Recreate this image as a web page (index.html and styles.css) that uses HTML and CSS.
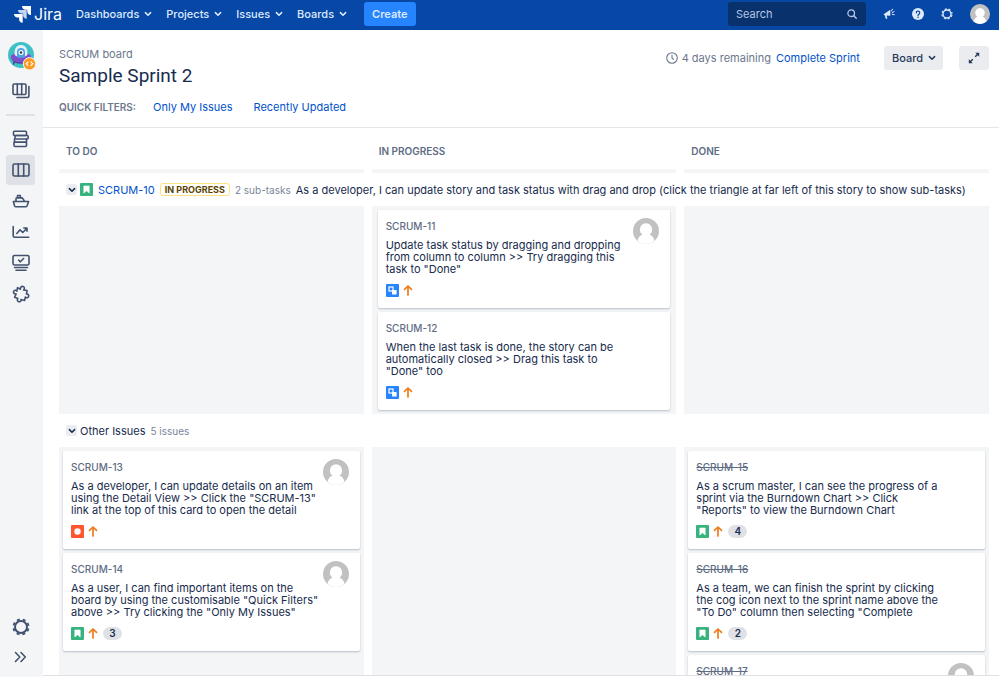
FILE: index.html
```
<!DOCTYPE html>
<html lang="en">
<head>
    <meta charset="UTF-8">
    <meta name="viewport" content="width=device-width, initial-scale=1.0">
    <title>SCRUM board - Jira</title>
    <link rel="stylesheet" href="styles.css">
</head>
<body>
    <svg class="sprite" aria-hidden="true">
        <symbol id="chevron" viewBox="0 0 8 8"><path d="M1.4 2.6 4 5.2l2.6-2.6" fill="none" stroke="currentColor" stroke-width="1.5" stroke-linecap="round" stroke-linejoin="round"/></symbol>
        <symbol id="story" viewBox="0 0 13 13"><rect width="13" height="13" rx="1" fill="#36b37e"/><path d="M3.800 3h5.400v7L6.500 7.800 3.800 10z" fill="#fff" stroke="#fff" stroke-width=".6" stroke-linejoin="round"/></symbol>
        <symbol id="subtask" viewBox="0 0 13 13"><rect width="13" height="13" rx="1" fill="#2684ff"/><rect x="3" y="3" width="4" height="4" fill="none" stroke="#fff" stroke-width="1.2"/><rect x="6" y="6" width="4.600" height="4.600" rx=".5" fill="#fff"/></symbol>
        <symbol id="bug" viewBox="0 0 13 13"><rect width="13" height="13" rx="1" fill="#ff5630"/><circle cx="6.500" cy="6.500" r="3.200" fill="#fff"/></symbol>
        <symbol id="priority" viewBox="0 0 10 13"><path d="M5 11V2.200M1.500 5.400 5 2l3.500 3.400" fill="none" stroke="#ee7d1c" stroke-width="1.700" stroke-linecap="round" stroke-linejoin="round"/></symbol>
        <symbol id="person" viewBox="0 0 26 26"><circle cx="13" cy="13" r="13" fill="#c1c1c1"/><path d="M4.500 22.800c.7-3.500 2.600-5.300 4.900-6.300a6.200 6.200 0 1 1 7.200 0c2.300 1 4.200 2.800 4.900 6.300A13 13 0 0 1 13 26a13 13 0 0 1-8.500-3.200z" fill="#fff"/></symbol>
        <symbol id="gear" viewBox="0 0 18 18"><circle cx="9" cy="9" r="6" fill="none" stroke="currentColor" stroke-width="2"/><circle cx="9" cy="9" r="7.600" fill="none" stroke="currentColor" stroke-width="1.800" stroke-dasharray="3 2.969" stroke-dashoffset="-1.500"/></symbol>
    </svg>

    <header class="topbar">
        <a class="logo" href="#">
            <svg width="17" height="17" viewBox="0 0 17 17"><path d="M8 0h9v9c-2.200 0-3.700-1.500-3.700-3.600V3.700h-1.700C9.500 3.700 8 2.200 8 0z" fill="#fff"/><path d="M4 4h8.700v8.700c-2.100 0-3.600-1.500-3.600-3.500V7.600H7.500C5.500 7.600 4 6.100 4 4z" fill="#c3d5f0"/><path d="M0 8h8.700v8.700c-2.100 0-3.600-1.500-3.600-3.500v-1.600H3.500C1.500 11.600 0 10.100 0 8z" fill="#fff"/></svg>
            <span>Jira</span>
        </a>
        <nav class="menu">
            <button type="button">Dashboards <svg class="chev"><use href="#chevron"/></svg></button>
            <button type="button">Projects <svg class="chev"><use href="#chevron"/></svg></button>
            <button type="button">Issues <svg class="chev"><use href="#chevron"/></svg></button>
            <button type="button">Boards <svg class="chev"><use href="#chevron"/></svg></button>
        </nav>
        <button type="button" class="create">Create</button>
        <label class="search">
            <input type="search" placeholder="Search" aria-label="Search">
            <svg width="10" height="10" viewBox="0 0 10 10"><circle cx="4.200" cy="4.200" r="3.300" fill="none" stroke="currentColor" stroke-width="1.300"/><path d="m6.800 6.800 2.400 2.400" stroke="currentColor" stroke-width="1.500" stroke-linecap="round"/></svg>
        </label>
        <div class="tools">
            <button type="button" aria-label="Feedback"><svg width="12" height="12" viewBox="0 0 12 12"><path d="M.6 6.200 7.300 1.800v6L3.600 7.600l.8 3-1.500.4L1.800 7.500z" fill="currentColor"/><path d="m8.600 3 .8-1.800M9.200 4.600l1.900-1M9.200 6.300l2 .4" stroke="currentColor" stroke-linecap="round"/></svg></button>
            <button type="button" aria-label="Help"><svg width="12" height="12" viewBox="0 0 12 12"><circle cx="6" cy="6" r="6" fill="currentColor"/><path d="M4.300 4.800a1.700 1.700 0 1 1 2.600 1.400c-.6.400-.9.600-.9 1.200" fill="none" stroke="#0747a6" stroke-width="1.200" stroke-linecap="round"/><circle cx="6" cy="9.200" r=".8" fill="#0747a6"/></svg></button>
            <button type="button" aria-label="Settings"><svg width="12" height="12"><use href="#gear"/></svg></button>
            <button type="button" aria-label="Profile"><svg width="20" height="20"><use href="#person"/></svg></button>
        </div>
    </header>

    <div class="layout">
        <aside class="sidebar">
            <a class="project" href="#" aria-label="Project">
                <svg width="28" height="28" viewBox="0 0 28 28"><circle cx="13" cy="13" r="13" fill="#3fc1c4"/><path d="m7 18-1.500 4M19 18l1.500 4" stroke="#5e3ca8" stroke-width="1.500" stroke-linecap="round"/><ellipse cx="13" cy="15.300" rx="10.300" ry="5" fill="#7f4fc9"/><path d="M4 17.500c4 3.500 14 3.500 18 0-1 3-5 4.300-9 4.300s-8-1.300-9-4.300z" fill="#5e3ca8"/><path d="M6.500 12C6.500 6 9 3 13 3s6.500 3 6.500 9c0 4-13 4-13 0z" fill="#e6f3fb"/><path d="M9 15V10a4 4 0 0 1 8 0v5c-2 1.200-6 1.200-8 0z" fill="#4ba3e3"/><circle cx="13" cy="10.500" r="2.500" fill="#fff"/><circle cx="13" cy="10.500" r="1.200" fill="#253858"/><circle cx="21.500" cy="21.800" r="6.200" fill="#ff991f" stroke="#f4f5f7"/><path d="m20.300 19.700-2 2.100 2 2.100M22.700 19.700l2 2.100-2 2.100" fill="none" stroke="#fff" stroke-width="1.200"/></svg>
            </a>
            <a class="side_link switcher" href="#" aria-label="Boards"><svg width="18" height="16" viewBox="0 0 18 16"><rect x="1" y="1" width="13" height="10.500" rx="1.200"/><path d="M5.300 1v10.500M9.700 1v10.500M16.900 3.500v9.300q0 1.700-1.700 1.700H5"/></svg></a>
            <div class="divider"></div>
            <a class="side_link" href="#" aria-label="Backlog"><svg width="18" height="18" viewBox="0 0 18 18"><rect x="1.500" y="1.300" width="13" height="4.200" rx="1"/><rect x="3" y="5.500" width="13.200" height="3.500" rx="1"/><path d="M2.500 9v3h12V9M2 12.200h12.500v3.300q0 1-1 1H3q-1 0-1-1z"/></svg></a>
            <a class="side_link active" href="#" aria-label="Active sprints"><svg width="18" height="14" viewBox="0 0 18 14"><rect x="1" y="1" width="16" height="12" rx="1.500"/><path d="M6.300 1v12M11.700 1v12"/></svg></a>
            <a class="side_link" href="#" aria-label="Releases"><svg width="18" height="14" viewBox="0 0 18 14"><path d="M1.400 7.500h15.200l-1.500 4.200q-.4 1-1.500 1H4q-1.100 0-1.500-1zM4 7.500V4.700q0-.8.800-.8h5.500l2.400 3.600M5.500 3.900V1.500h2.800v2.400"/></svg></a>
            <a class="side_link" href="#" aria-label="Reports"><svg width="18" height="14" viewBox="0 0 18 14"><path d="M1.200 1.500v9.300q0 1.500 1.500 1.500h14M4.800 8.500l3.200-3.700 2.800 2.700 4-4.200M11.800 3h3.200v3.200"/></svg></a>
            <a class="side_link" href="#" aria-label="Issues and filters"><svg width="18" height="18" viewBox="0 0 18 18"><rect x="1" y="1.500" width="16" height="9.500" rx="1.500"/><path d="m6.700 6.200 1.700 1.600 3.200-3.300M2.500 13.500h13M4 16.200h10"/></svg></a>
            <a class="side_link" href="#" aria-label="Add-ons"><svg width="18" height="18" viewBox="0 0 18 18"><path transform="rotate(18 9 9)" d="M7 4.600C6.100 2.600 7 1.200 8.600 1.200s2.500 1.400 1.600 3.200l3.500-.6.500 3.600c1.500-.8 2.800.1 2.800 1.600s-1.300 2.400-2.900 1.500l.3 3.600-3.700.2c.7 1.500-.1 2.700-1.500 2.700s-2.400-1.200-1.800-2.800l-3.500-.2.500-3.500C2.800 11.300 1.300 10.500 1.200 9s1.500-2.500 3-1.500L3.700 4z"/></svg></a>
            <div class="side_bottom">
                <a class="side_link" href="#" aria-label="Project settings"><svg width="18" height="18"><use class="gear" href="#gear"/></svg></a>
                <a class="side_link" href="#" aria-label="Expand sidebar"><svg width="13" height="12" viewBox="0 0 13 12"><path d="m1.500 1.500 4.300 4.500-4.300 4.500M7 1.500 11.300 6 7 10.500"/></svg></a>
            </div>
        </aside>

        <main class="main">
            <div class="page_head">
                <div class="head_row">
                    <div>
                        <div class="crumb">SCRUM board</div>
                        <h1>Sample Sprint 2</h1>
                    </div>
                    <div class="actions">
                        <svg width="12" height="12" viewBox="0 0 12 12"><circle cx="6" cy="6" r="5.300" fill="none" stroke="currentColor" stroke-width="1.100"/><path d="M6 2.800V6l2 1.600" fill="none" stroke="currentColor" stroke-width="1.100"/></svg>
                        <span class="remaining">4 days remaining</span>
                        <a class="complete" href="#">Complete Sprint</a>
                        <button type="button" class="grey_btn board_btn">Board <svg class="chev"><use href="#chevron"/></svg></button>
                        <button type="button" class="grey_btn expand_btn" aria-label="Full screen"><svg width="12" height="12" viewBox="0 0 12 12"><path d="M7.200 4.800 10 2M4.800 7.200 2 10" stroke="currentColor" stroke-width="1.400"/><path d="M7.300.8h3.900v3.900zM.8 7.300v3.900h3.900z" fill="currentColor"/></svg></button>
                    </div>
                </div>
                <div class="filters">
                    <span>QUICK FILTERS:</span>
                    <a href="#">Only My Issues</a>
                    <a href="#">Recently Updated</a>
                </div>
            </div>

            <div class="board">
                <div class="columns col_heads">
                    <h2>TO DO</h2>
                    <h2>IN PROGRESS</h2>
                    <h2>DONE</h2>
                </div>

                <div class="lane_head">
                    <button type="button" class="toggle" aria-label="Collapse"><svg class="chev"><use href="#chevron"/></svg></button>
                    <svg class="type"><use href="#story"/></svg>
                    <a class="lane_key" href="#">SCRUM-10</a>
                    <span class="status">IN PROGRESS</span>
                    <span class="count">2 sub-tasks</span>
                    <span class="lane_title">As a developer, I can update story and task status with drag and drop (click the triangle at far left of this story to show sub-tasks)</span>
                </div>
                <div class="columns">
                    <div class="column"></div>
                    <div class="column wide_pad">
                        <article class="card">
                            <div class="card_body">
                                <a class="key" href="#">SCRUM-11</a>
                                <p>Update task status by dragging and dropping<br>from column to column &gt;&gt; Try dragging this<br>task to "Done"</p>
                                <div class="meta"><svg class="type"><use href="#subtask"/></svg><svg class="prio"><use href="#priority"/></svg></div>
                            </div>
                            <svg class="avatar"><use href="#person"/></svg>
                        </article>
                        <article class="card">
                            <div class="card_body">
                                <a class="key" href="#">SCRUM-12</a>
                                <p>When the last task is done, the story can be<br>automatically closed &gt;&gt; Drag this task to<br>"Done" too</p>
                                <div class="meta"><svg class="type"><use href="#subtask"/></svg><svg class="prio"><use href="#priority"/></svg></div>
                            </div>
                        </article>
                    </div>
                    <div class="column"></div>
                </div>

                <div class="lane_head">
                    <button type="button" class="toggle" aria-label="Collapse"><svg class="chev"><use href="#chevron"/></svg></button>
                    <span class="lane_title">Other Issues</span>
                    <span class="count">5 issues</span>
                </div>
                <div class="columns">
                    <div class="column">
                        <article class="card">
                            <div class="card_body">
                                <a class="key" href="#">SCRUM-13</a>
                                <p>As a developer, I can update details on an item<br>using the Detail View &gt;&gt; Click the "SCRUM-13"<br>link at the top of this card to open the detail</p>
                                <div class="meta"><svg class="type"><use href="#bug"/></svg><svg class="prio"><use href="#priority"/></svg></div>
                            </div>
                            <svg class="avatar"><use href="#person"/></svg>
                        </article>
                        <article class="card">
                            <div class="card_body">
                                <a class="key" href="#">SCRUM-14</a>
                                <p>As a user, I can find important items on the<br>board by using the customisable "Quick Filters"<br>above &gt;&gt; Try clicking the "Only My Issues"</p>
                                <div class="meta"><svg class="type"><use href="#story"/></svg><svg class="prio"><use href="#priority"/></svg><span class="points">3</span></div>
                            </div>
                            <svg class="avatar"><use href="#person"/></svg>
                        </article>
                    </div>
                    <div class="column"></div>
                    <div class="column">
                        <article class="card">
                            <div class="card_body">
                                <a class="key done" href="#">SCRUM-15</a>
                                <p>As a scrum master, I can see the progress of a<br>sprint via the Burndown Chart &gt;&gt; Click<br>"Reports" to view the Burndown Chart</p>
                                <div class="meta"><svg class="type"><use href="#story"/></svg><svg class="prio"><use href="#priority"/></svg><span class="points">4</span></div>
                            </div>
                        </article>
                        <article class="card">
                            <div class="card_body">
                                <a class="key done" href="#">SCRUM-16</a>
                                <p>As a team, we can finish the sprint by clicking<br>the cog icon next to the sprint name above the<br>"To Do" column then selecting "Complete</p>
                                <div class="meta"><svg class="type"><use href="#story"/></svg><svg class="prio"><use href="#priority"/></svg><span class="points">2</span></div>
                            </div>
                        </article>
                        <article class="card">
                            <div class="card_body">
                                <a class="key done" href="#">SCRUM-17</a>
                                <div class="meta"><svg class="type"><use href="#story"/></svg><svg class="prio"><use href="#priority"/></svg></div>
                            </div>
                            <svg class="avatar"><use href="#person"/></svg>
                        </article>
                    </div>
                </div>
            </div>
        </main>
    </div>
</body>
</html>
```
FILE: styles.css
```
*{margin: 0; padding: 0; box-sizing: border-box;}
body{height: 100vh; display: flex; flex-direction: column; overflow: hidden; font-family: Inter, "Liberation Sans", sans-serif; font-size: 11px; line-height: 16px; color: #172b4d; background: #fff;}
a{color: #0052cc; text-decoration: none;}
button{font: inherit; color: inherit; background: none; border: 0; cursor: pointer;}
svg{display: block; flex: none;}
.sprite{position: absolute; width: 0; height: 0;}
.chev{width: 8px; height: 8px;}

/* top bar */
.topbar{height: 30px; flex: none; display: flex; align-items: center; padding: 0 9px 2px 14px; background: #0747a6; color: #deebff;}
.logo{display: flex; align-items: center; gap: 3px; color: #fff; font-size: 16px;}
.menu{display: flex; gap: 14px; margin-left: 14px;}
.menu button{display: flex; align-items: center; gap: 5px; font-weight: 500;}
.create{height: 24px; margin-left: 17px; padding: 0 8px; border-radius: 3px; background: #2684ff; font-weight: 600;}
.search{display: flex; align-items: center; width: 138px; height: 24px; margin-left: auto; padding: 0 9px 0 8px; border-radius: 3px; background: #09326c; color: #b3c6e6;}
.search input{flex: 1; min-width: 0; border: 0; outline: 0; background: none; font: inherit; color: inherit;}
.search input::placeholder{color: #b3c6e6;}
.tools{display: flex; align-items: center; gap: 17px; margin-left: 17px;}

/* sidebar */
.layout{flex: 1; min-height: 0; display: flex;}
.sidebar{width: 43px; flex: none; display: flex; flex-direction: column; align-items: center; gap: 1px; padding: 12px 2px 5px 0; background: #f4f5f7;}
.project{margin-left: 3px;}
.side_link{width: 29px; height: 30px; display: flex; align-items: center; justify-content: center; border-radius: 3px; color: #42526e;}
.side_link svg{fill: none; stroke: currentColor; stroke-width: 1.6; stroke-linecap: round; stroke-linejoin: round;}
.side_link .gear{stroke-linecap: butt;}
.switcher{margin-top: 5px;}
.divider{width: 29px; height: 2px; margin: 7px 0; background: #dfe1e6;}
.active{background: #dfe1e6;}
.side_bottom{margin-top: auto;}

/* page header */
.main{flex: 1; min-width: 0; display: flex; flex-direction: column; padding-bottom: 1px;}
.page_head{padding: 16px 10px 12px 16px; border-bottom: 1px solid #e4e6eb;}
.head_row{display: flex; justify-content: space-between; align-items: flex-start;}
.crumb{color: #6b778c;}
h1{font-family: Roboto, Inter, sans-serif; font-size: 19px; line-height: 28px; font-weight: 400;}
.actions{display: flex; align-items: center; color: #6b778c;}
.remaining{margin: 0 5px 0 4px;}
.grey_btn{height: 24px; display: flex; align-items: center; justify-content: center; gap: 5px; border-radius: 3px; background: #ebecf0; color: #253858; font-weight: 500;}
.board_btn{margin: 0 16px 0 24px; padding: 0 7px 0 8px;}
.expand_btn{width: 30px;}
.filters{display: flex; align-items: center; margin-top: 9px;}
.filters span{margin-right: 17px; font-size: 10px; font-weight: 600; color: #6b778c;}
.filters a{margin-right: 21px;}

/* board */
.board{flex: 1; min-height: 0; overflow: hidden; padding: 15px 10px 0 16px; border-bottom: 1px solid #dfe1e6;}
.columns{display: grid; grid-template-columns: repeat(3, minmax(0, 1fr)); gap: 8px;}
.col_heads h2{padding: 0 7px 10px; border-bottom: 4px solid #f4f5f7; font-size: 10px; line-height: 16px; font-weight: 600; color: #5e6c84;}
.lane_head{display: flex; align-items: center; gap: 5px; height: 33px; padding-left: 7px; white-space: nowrap;}
.toggle{flex: none; width: 11px; height: 11px; display: flex; align-items: center; justify-content: center; margin-right: -2px; border-radius: 2px; background: #ebecf0;}
.type{width: 13px; height: 13px;}
.status{padding: 0 4px; border: 1px solid #ffe380; border-radius: 3px; font-size: 9px; line-height: 11px; font-weight: 700; color: #594300;}
.count{font-size: 10px; color: #7a869a;}
.column{display: flex; flex-direction: column; gap: 4px; padding: 4px; background: #f4f5f7;}
.wide_pad{padding: 4px 6px;}
.card{display: flex; align-items: flex-start; padding: 8px 11px 11px 8px; border-radius: 2px; background: #fff; box-shadow: 0 1px 2px rgba(9, 30, 66, .25);}
.card_body{flex: 1; min-width: 0; padding-top: 2px; white-space: nowrap;}
.key{display: block; font-size: 10px; line-height: 12px; font-weight: 500; color: #5e6c84;}
.done{text-decoration: line-through;}
.card p{margin-top: 7px; line-height: 12px;}
.meta{display: flex; align-items: center; gap: 4px; margin-top: 9px;}
.prio{width: 10px; height: 13px;}
.points{min-width: 19px; margin-left: 1px; border-radius: 7px; background: #dfe1e6; font-size: 10px; line-height: 13px; font-weight: 600; text-align: center;}
.avatar{width: 26px; height: 26px;}
```
